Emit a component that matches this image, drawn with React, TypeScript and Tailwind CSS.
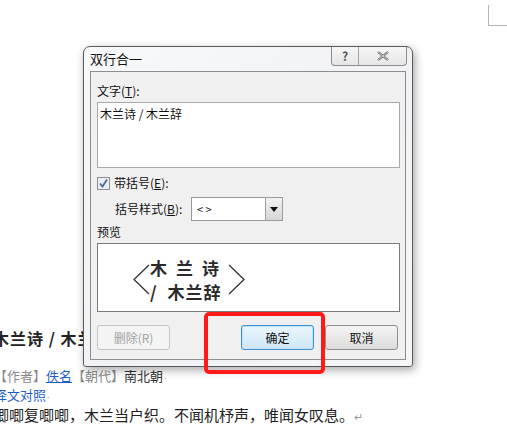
import React from 'react'

const cjk = { fontFamily: '"Noto Sans CJK SC", "Noto Sans", sans-serif' }

function Btn({ label, primary, disabled }: { label: React.ReactNode; primary?: boolean; disabled?: boolean }) {
  return (
    <div
      className={
        'flex h-[25px] w-[73px] items-center justify-center rounded-[3px] border text-[12px] ' +
        (disabled
          ? 'border-[#c4c4c4] bg-[#f4f4f4] text-[#a3a3a3]'
          : primary
            ? 'border-[#3d8fcf] bg-gradient-to-b from-[#eaf6fd] to-[#cfe6f6] text-[#111] shadow-[inset_0_0_0_1px_#bfe3f8]'
            : 'border-[#8e8f8f] bg-gradient-to-b from-[#f4f4f4] to-[#dcdcdc] text-[#111]')
      }
    >
      {label}
    </div>
  )
}

function Bracket({ dir }: { dir: 'l' | 'r' }) {
  return (
    <svg width="17" height="31" viewBox="0 0 17 31" className="shrink-0">
      <polyline
        points={dir === 'l' ? '16,1 1,15.5 16,30' : '1,1 16,15.5 1,30'}
        fill="none"
        stroke="#333"
        strokeWidth="1.3"
      />
    </svg>
  )
}

export default function App() {
  return (
    <div className="relative h-[426px] w-[507px] overflow-hidden bg-white" style={cjk}>
      {/* page corner mark */}
      <div className="absolute left-[488px] top-[5px] h-[21px] w-[19px] border-b border-l border-[#b4b4b4]" />

      {/* document text behind the dialog */}
      <div className="flex flex-col pt-[327px] text-[#222]">
        <div className="ml-[-7px] text-[16px] font-bold leading-[22px] tracking-[1px]">木兰诗 / 木兰辞</div>
        <div className="ml-[-6px] mt-[17px] flex items-center text-[13px] leading-[20px]">
          <span className="text-[#8a8a8a]">【作者】</span>
          <span className="text-[#1f5fc4] underline">佚名 </span>
          <span className="text-[#8a8a8a]">【朝代】</span>
          <span className="text-[#333]">南北朝</span>
          <span className="ml-[1px] text-[9px] text-[#aaa]">.</span>
        </div>
        <div className="ml-[-6px] mt-[-1px] flex items-center text-[13px] leading-[20px] text-[#1f5fc4]">
          译文对照<span className="ml-[1px] text-[9px] text-[#aaa]">.</span>
        </div>
        <div className="ml-[-6px] mt-[0px] whitespace-nowrap text-[15px] leading-[20px] text-[#222]">
          唧唧复唧唧，木兰当户织。不闻机杼声，唯闻女叹息。<span className="text-[11px] text-[#999]">↵</span>
        </div>
      </div>

      {/* dialog */}
      <div className="absolute left-[83px] top-[46px] flex h-[321px] w-[330px] flex-col rounded-t-[7px] rounded-b-[3px] border border-[#5a5a5a] bg-gradient-to-br from-[#f8f9fb] via-[#f0f2f5] to-[#f5f6f8] px-[6px] pb-[6px] shadow-[2px_3px_10px_rgba(0,0,0,0.35)]">
        <div className="flex h-[24px] items-start justify-between">
          <div className="pt-[4px] text-[13px] leading-[16px] text-[#111]">双行合一</div>
          <div className="mr-[-1px] flex h-[19px] border border-t-0 border-[#8c8c8c] rounded-b-[4px] bg-gradient-to-b from-[#f6f6f6] to-[#e6e6e6]">
            <div className="flex w-[27px] items-center justify-center border-r border-[#a5a5a5] text-[12px] font-bold text-[#555]">?</div>
            <div className="flex w-[47px] items-center justify-center">
              <svg width="12" height="10" viewBox="0 0 12 10">
                <path d="M1 1 L11 9 M11 1 L1 9" stroke="#555" strokeWidth="2.2" fill="none" />
                <path d="M1 1 L11 9 M11 1 L1 9" stroke="#f3f3f3" strokeWidth="0.8" fill="none" />
              </svg>
            </div>
          </div>
        </div>

        <div className="flex flex-1 flex-col border border-[#8e8e8e] bg-[#f0f0f0] px-[6px] pt-[12px] text-[12px] leading-[14px] text-[#111]">
          <div>
            文字(<span className="underline">T</span>):
          </div>
          <div className="mt-[4px] h-[66px] w-[303px] border border-[#a9a9a9] bg-white px-[2px] pt-[4px]">
            木兰诗 / 木兰辞
          </div>

          <div className="mt-[8px] flex items-center gap-[4px]">
            <svg width="13" height="13" viewBox="0 0 13 13">
              <rect x="0.5" y="0.5" width="12" height="12" fill="#e9eef4" stroke="#8f8f8f" />
              <path d="M3 6.5 L5.5 9.5 L10 2.5" stroke="#4a6a9a" strokeWidth="1.8" fill="none" />
            </svg>
            <span>
              带括号(<span className="underline">E</span>):
            </span>
          </div>

          <div className="mt-[7px] flex items-center pl-[18px]">
            <span className="w-[76px]">
              括号样式(<span className="underline">B</span>):
            </span>
            <div className="flex h-[24px] w-[92px] border border-[#9b9b9b] bg-white">
              <div className="flex flex-1 items-center pl-[5px] text-[11px]">&lt; &gt;</div>
              <div className="flex w-[17px] items-center justify-center border-l border-[#a0a0a0] bg-gradient-to-b from-[#f2f2f2] to-[#d6d6d6]">
                <svg width="8" height="5" viewBox="0 0 8 5">
                  <path d="M0 0 L8 0 L4 5 Z" fill="#111" />
                </svg>
              </div>
            </div>
          </div>

          <div className="mt-[4px]">预览</div>

          <div className="mt-[4px] flex h-[69px] w-[303px] items-center border border-[#7a7a7a] bg-white pl-[35px] pt-[4px]">
            <Bracket dir="l" />
            <div className="flex flex-col text-[17px] font-semibold leading-[24px] text-[#2a2a2a]">
              <div className="tracking-[9px]">木兰诗</div>
              <div className="tracking-[1px]">
                <span className="mr-[10px]">/</span>木兰辞
              </div>
            </div>
            <Bracket dir="r" />
          </div>

          <div className="mt-[13px] flex items-center">
            <Btn label="删除(R)" disabled />
            <div className="ml-[71px]">
              <Btn label="确定" primary />
            </div>
            <div className="ml-[11px]">
              <Btn label="取消" />
            </div>
          </div>
        </div>
      </div>

      {/* red highlight */}
      <div className="absolute left-[204px] top-[312px] h-[62px] w-[121px] rounded-[5px] border-[4px] border-[#ff1a1a]" />
    </div>
  )
}
